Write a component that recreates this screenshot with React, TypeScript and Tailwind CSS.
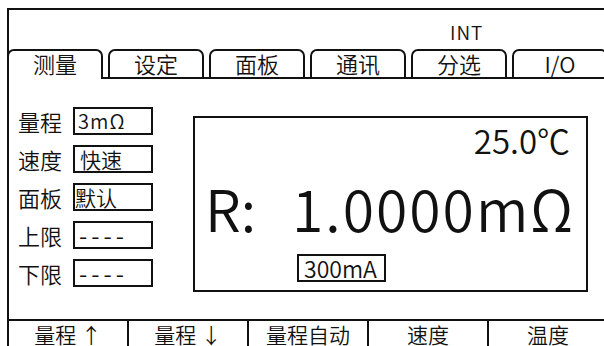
import React from 'react';

const tabs = ['测量', '设定', '面板', '通讯', '分选', 'I/O'];

const fields: { label: string; value: string; cls: string }[] = [
  { label: '量程', value: '3mΩ', cls: 'pl-[3px] text-[20px] tracking-[1px]' },
  { label: '速度', value: '快速', cls: 'pl-[5px] text-[21px]' },
  { label: '面板', value: '默认', cls: 'pl-[0px] text-[21px]' },
  { label: '上限', value: '----', cls: 'pl-[4px] text-[24px] tracking-[4px]' },
  { label: '下限', value: '----', cls: 'pl-[4px] text-[24px] tracking-[4px]' },
];

const softkeys = ['量程 ↑', '量程 ↓', '量程自动', '速度', '温度'];

const App: React.FC = () => {
  return (
    <div
      className="w-[604px] h-[346px] overflow-hidden bg-white text-[#111] font-[350]"
      style={{ fontFamily: '"Noto Sans CJK SC", "Noto Sans", sans-serif' }}
    >
      <div className="ml-[7px] mt-[8px] w-[640px] h-[400px] border-l-2 border-t-2 border-[#111] flex flex-col">
        {/* status line */}
        <div className="h-[39px] pl-[441px] pt-[12px] text-[19px] leading-[19px] tracking-[1px]">INT</div>

        {/* tabs */}
        <div className="h-[30px] flex -ml-[2px]">
          {tabs.map((t, i) => (
            <React.Fragment key={t}>
              {i > 0 && <div className="w-[5px] border-b-2 border-[#111]" />}
              <div
                className={
                  'w-[96px] h-full rounded-t-[7px] border-t-2 border-x-2 border-[#111] flex justify-center pt-[1px] text-[22px] leading-[22px] ' +
                  (i === 0 ? '' : 'border-b-2')
                }
              >
                {t}
              </div>
            </React.Fragment>
          ))}
          <div className="flex-1 border-b-2 border-[#111]" />
        </div>

        {/* body */}
        <div className="h-[240px] flex">
          <div className="pl-[9px] pt-[28px] flex flex-col gap-[10px]">
            {fields.map((f) => (
              <div key={f.label} className="h-[28px] flex items-center">
                <span className="w-[55px] text-[22px] leading-[22px]">{f.label}</span>
                <div className={'w-[80px] h-[28px] border-2 border-[#111] flex items-center leading-none ' + f.cls}>
                  {f.value}
                </div>
              </div>
            ))}
          </div>

          <div className="ml-[40px] mt-[37px] w-[395px] h-[176px] border-2 border-[#111] flex flex-col">
            <div className="flex justify-end pr-[16px] pt-[6px] text-[33px] leading-[33px]">25.0℃</div>
            <div className="flex mt-[22px] pl-[10px] text-[57px] leading-[57px] whitespace-pre">
              <span>R:</span>
              <span className="ml-[36px] tracking-[2px]">1.0000mΩ</span>
            </div>
            <div className="ml-[102px] mt-[18px] w-[89px] h-[28px] border-2 border-[#111] pl-[5px] pt-[1px] text-[23px] leading-[23px]">
              300mA
            </div>
          </div>
        </div>

        {/* soft keys */}
        <div className="flex border-t-2 border-[#111] h-[40px]">
          {softkeys.map((k) => (
            <div
              key={k}
              className="w-[120px] border-r-2 border-[#111] flex justify-center pt-[3px] text-[21px] leading-[21px] whitespace-pre"
            >
              {k}
            </div>
          ))}
        </div>
      </div>
    </div>
  );
};

export default App;
